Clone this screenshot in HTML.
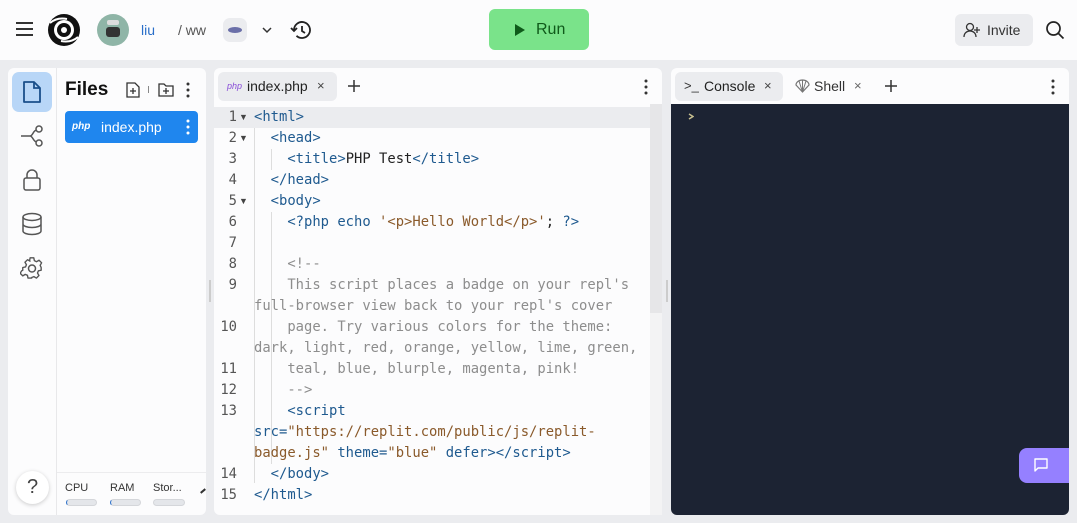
<!DOCTYPE html>
<html><head><meta charset="utf-8">
<style>
*{box-sizing:border-box;margin:0;padding:0}
body{width:1077px;height:523px;overflow:hidden;background:#ebecef;font-family:"Liberation Sans",sans-serif;position:relative;color:#222}
.abs{position:absolute}
#hdr{left:0;top:0;width:1077px;height:60px;background:#fcfcfd}
.panel{background:#fcfcfd;border-radius:6px}
.code{font-family:"DejaVu Sans Mono",monospace;font-size:13.85px;line-height:21px;white-space:pre;color:#1f5a8f}
.ln{position:absolute;left:212px;width:25px;text-align:right;font-family:"DejaVu Sans Mono",monospace;font-size:13.85px;line-height:21px;color:#555}
.fold{position:absolute;left:239px;font-size:9px;line-height:21px;color:#444}
.t{color:#1f5a8f}.p{color:#222}.s{color:#8a5a2b}.c{color:#8d8d8d}
</style></head><body>
<div id="hdr" class="abs"></div>
<svg class="abs" style="left:15px;top:21px" width="19" height="16"><path d="M1 2h17M1 8h17M1 14h17" stroke="#333" stroke-width="2"/></svg>
<svg class="abs" style="left:47px;top:13px" width="34" height="34" viewBox="0 0 34 34"><circle cx="17" cy="17" r="16" fill="#111"/><circle cx="17" cy="17" r="10" fill="#fff"/><circle cx="17" cy="17" r="7" fill="#111"/><circle cx="17" cy="17" r="3" fill="#fff"/><path d="M3 10 Q10 4 20 6" stroke="#fff" stroke-width="2" fill="none"/><path d="M31 24 Q24 30 14 28" stroke="#fff" stroke-width="2" fill="none"/></svg>
<div class="abs" style="left:97px;top:14px;width:32px;height:32px;border-radius:50%;background:#8fb5a7"></div>
<div class="abs" style="left:107px;top:20px;width:12px;height:5px;background:#ddd;border-radius:2px"></div>
<div class="abs" style="left:106px;top:27px;width:14px;height:10px;background:#333;border-radius:3px"></div>
<div class="abs" style="left:141px;top:22px;font-size:14px;color:#2a6fc9">liu</div>
<div class="abs" style="left:178px;top:22px;font-size:14px;color:#555">/ ww</div>
<div class="abs" style="left:223px;top:18px;width:24px;height:24px;border-radius:7px;background:#ebecef"></div>
<div class="abs" style="left:228px;top:27px;width:14px;height:6px;border-radius:50%;background:#6a6fa8"></div>
<svg class="abs" style="left:261px;top:26px" width="12" height="8"><path d="M2 2l4 4 4-4" stroke="#333" stroke-width="1.5" fill="none"/></svg>
<svg class="abs" style="left:290px;top:20px" width="22" height="20" viewBox="0 0 22 20"><path d="M4 10a8 8 0 1 1 2.5 5.8" stroke="#222" stroke-width="1.8" fill="none"/><path d="M1 8l3 3 3-3" stroke="#222" stroke-width="1.8" fill="none"/><path d="M12 6v5l3 2" stroke="#222" stroke-width="1.8" fill="none"/></svg>
<div class="abs" style="left:489px;top:9px;width:100px;height:41px;border-radius:6px;background:#7ae38a"></div>
<svg class="abs" style="left:514px;top:23px" width="12" height="14"><path d="M1 1l10 6-10 6z" fill="#0f5a1a"/></svg>
<div class="abs" style="left:536px;top:21px;font-size:16px;color:#0f5a1a">Run</div>
<div class="abs" style="left:955px;top:14px;width:78px;height:32px;border-radius:6px;background:#ebecef"></div>
<svg class="abs" style="left:963px;top:22px" width="18" height="16"><circle cx="7" cy="5" r="3.5" stroke="#333" stroke-width="1.3" fill="none"/><path d="M1 15c0-4 3-6 6-6s6 2 6 6M14 5v6M11 8h6" stroke="#333" stroke-width="1.3" fill="none"/></svg>
<div class="abs" style="left:987px;top:22px;font-size:14px;color:#333">Invite</div>
<svg class="abs" style="left:1045px;top:20px" width="20" height="20"><circle cx="8.5" cy="8.5" r="6.5" stroke="#222" stroke-width="1.7" fill="none"/><path d="M13.5 13.5l5 5" stroke="#222" stroke-width="1.7"/></svg>

<div class="abs panel" style="left:8px;top:68px;width:198px;height:447px"></div>
<div class="abs" style="left:56px;top:68px;width:1px;height:447px;background:#e8e8ea"></div>
<div class="abs" style="left:12px;top:72px;width:40px;height:40px;border-radius:7px;background:#b8d6f7"></div>
<svg class="abs" style="left:22px;top:80px" width="20" height="24"><path d="M2 2h10l6 6v14H2z" stroke="#1a4f8a" stroke-width="1.8" fill="none" stroke-linejoin="round"/><path d="M12 2v6h6" stroke="#1a4f8a" stroke-width="1.8" fill="none"/></svg>
<svg class="abs" style="left:20px;top:124px" width="24" height="24"><path d="M1 12h9M10 12c3 0 3-6 7-6M10 12c3 0 3 6 7 6" stroke="#555" stroke-width="1.5" fill="none"/><circle cx="19" cy="5" r="3" stroke="#555" stroke-width="1.5" fill="#fff"/><circle cx="19" cy="19" r="3" stroke="#555" stroke-width="1.5" fill="#fff"/></svg>
<svg class="abs" style="left:22px;top:168px" width="20" height="24"><rect x="2" y="10" width="16" height="12" rx="2" stroke="#555" stroke-width="1.5" fill="none"/><path d="M5 10V7a5 5 0 0 1 10 0v3" stroke="#555" stroke-width="1.5" fill="none"/></svg>
<svg class="abs" style="left:21px;top:212px" width="22" height="24"><ellipse cx="11" cy="5" rx="9" ry="3.5" stroke="#555" stroke-width="1.5" fill="none"/><path d="M2 5v14c0 2 4 3.5 9 3.5s9-1.5 9-3.5V5M2 12c0 2 4 3.5 9 3.5s9-1.5 9-3.5" stroke="#555" stroke-width="1.5" fill="none"/></svg>
<svg class="abs" style="left:20px;top:256px" width="24" height="24" viewBox="0 0 24 24"><path d="M10 2h4l.6 3 2.4 1.2 2.7-1.6 2.8 2.8-1.6 2.7L22 12.5v3l-3 .6-1 2.4 1.6 2.7-2.8 2.8-2.7-1.6-2.4 1V24h-4l-.6-3-2.4-1-2.7 1.6-2.8-2.8 1.6-2.7L2 15.5v-3l3-.6 1-2.4-1.6-2.7 2.8-2.8 2.7 1.6L9.4 5z" transform="scale(.92) translate(1,0)" stroke="#555" stroke-width="1.5" fill="none" stroke-linejoin="round"/><circle cx="12" cy="12.5" r="3.5" stroke="#555" stroke-width="1.5" fill="none"/></svg>
<div class="abs" style="left:16px;top:471px;width:33px;height:33px;border-radius:50%;background:#fff;box-shadow:0 1px 4px rgba(0,0,0,.2);text-align:center;font-size:20px;line-height:33px;color:#444">?</div>

<div class="abs" style="left:65px;top:79px;font-size:19px;font-weight:bold;color:#111">Files</div>
<svg class="abs" style="left:126px;top:82px" width="14" height="16"><path d="M1 1h8l4 4v10H1z" stroke="#333" stroke-width="1.3" fill="none"/><path d="M7 6v6M4 9h6" stroke="#333" stroke-width="1.3"/></svg>
<div class="abs" style="left:148px;top:86px;width:1px;height:7px;background:#888"></div>
<svg class="abs" style="left:158px;top:83px" width="16" height="14"><path d="M1 1h5l2 2h7v10H1z" stroke="#333" stroke-width="1.3" fill="none"/><path d="M8 5v6M5 8h6" stroke="#333" stroke-width="1.3"/></svg>
<svg class="abs" style="left:185px;top:82px" width="6" height="16"><circle cx="3" cy="2" r="1.5" fill="#333"/><circle cx="3" cy="8" r="1.5" fill="#333"/><circle cx="3" cy="14" r="1.5" fill="#333"/></svg>
<div class="abs" style="left:65px;top:111px;width:133px;height:32px;border-radius:4px;background:#1f86ee"></div>
<div class="abs" style="left:72px;top:121px;font-size:10px;font-style:italic;font-weight:bold;color:#fff">php</div>
<div class="abs" style="left:101px;top:119px;font-size:14px;color:#fff">index.php</div>
<svg class="abs" style="left:185px;top:119px" width="6" height="16"><circle cx="3" cy="2" r="1.5" fill="#fff"/><circle cx="3" cy="8" r="1.5" fill="#fff"/><circle cx="3" cy="14" r="1.5" fill="#fff"/></svg>
<div class="abs" style="left:57px;top:472px;width:149px;height:1px;background:#ececee"></div>
<div class="abs" style="left:65px;top:482px;font-size:11px;color:#333">CPU</div>
<div class="abs" style="left:110px;top:482px;font-size:11px;color:#333">RAM</div>
<div class="abs" style="left:153px;top:482px;font-size:11px;color:#333">Stor...</div>
<div class="abs" style="left:66px;top:499px;width:31px;height:7px;border-radius:4px;background:#e4e6ea;border:1px solid #d4d6da;border-left:1.5px solid #2a6fc9"></div>
<div class="abs" style="left:110px;top:499px;width:31px;height:7px;border-radius:4px;background:#e4e6ea;border:1px solid #d4d6da;border-left:1.5px solid #2a6fc9"></div>
<div class="abs" style="left:153px;top:499px;width:32px;height:7px;border-radius:4px;background:#e4e6ea;border:1px solid #d4d6da"></div>
<div class="abs" style="left:200px;top:490px;width:6px;height:2px;background:#333;transform:rotate(-40deg)"></div>

<div class="abs panel" style="left:214px;top:68px;width:448px;height:447px"></div>
<div class="abs" style="left:218px;top:72px;width:119px;height:29px;border-radius:6px;background:#ebecef"></div>
<div class="abs" style="left:227px;top:81px;font-size:9px;font-style:italic;color:#8a4fd8">php</div>
<div class="abs" style="left:247px;top:78px;font-size:14px;color:#222">index.php</div>
<div class="abs" style="left:317px;top:78px;font-size:13px;color:#444">×</div>
<svg class="abs" style="left:347px;top:79px" width="14" height="14"><path d="M7 1v12M1 7h12" stroke="#333" stroke-width="1.5"/></svg>
<svg class="abs" style="left:643px;top:79px" width="6" height="16"><circle cx="3" cy="2" r="1.5" fill="#333"/><circle cx="3" cy="8" r="1.5" fill="#333"/><circle cx="3" cy="14" r="1.5" fill="#333"/></svg>
<div class="abs" style="left:214px;top:107px;width:436px;height:21px;background:#ebecef"></div>
<div class="abs" style="left:650px;top:104px;width:12px;height:411px;background:#f3f3f4"></div>
<div class="abs" style="left:650px;top:104px;width:12px;height:209px;background:#e6e6e8"></div>
<div class="abs" style="left:254px;top:128px;width:1px;height:355px;background:#ddd"></div>
<div class="abs" style="left:271px;top:149px;width:1px;height:21px;background:#ddd"></div>
<div class="abs" style="left:271px;top:212px;width:1px;height:252px;background:#ddd"></div>

<div class="ln" style="top:107px">1</div><div class="fold" style="top:107px">▼</div>
<div class="ln" style="top:128px">2</div><div class="fold" style="top:128px">▼</div>
<div class="ln" style="top:149px">3</div>
<div class="ln" style="top:170px">4</div>
<div class="ln" style="top:191px">5</div><div class="fold" style="top:191px">▼</div>
<div class="ln" style="top:212px">6</div>
<div class="ln" style="top:233px">7</div>
<div class="ln" style="top:254px">8</div>
<div class="ln" style="top:275px">9</div>
<div class="ln" style="top:317px">10</div>
<div class="ln" style="top:359px">11</div>
<div class="ln" style="top:380px">12</div>
<div class="ln" style="top:401px">13</div>
<div class="ln" style="top:464px">14</div>
<div class="ln" style="top:485px">15</div>
<div class="abs code" style="left:254px;top:107px">&lt;html&gt;
  &lt;head&gt;
    &lt;title&gt;<span class="p">PHP Test</span>&lt;/title&gt;
  &lt;/head&gt;
  &lt;body&gt;
    &lt;?php echo <span class="s">'&lt;p&gt;Hello World&lt;/p&gt;'</span><span class="p">;</span> ?&gt;

<span class="c">    &lt;!--
    This script places a badge on your repl's
full-browser view back to your repl's cover
    page. Try various colors for the theme:
dark, light, red, orange, yellow, lime, green,
    teal, blue, blurple, magenta, pink!
    --&gt;</span>
    &lt;script
src=<span class="s">"https://replit.com/public/js/replit-
badge.js"</span> theme=<span class="s">"blue"</span> defer&gt;&lt;/script&gt;
  &lt;/body&gt;
&lt;/html&gt;</div>
<div class="abs" style="left:209px;top:280px;width:2px;height:22px;background:#ccc"></div>
<div class="abs" style="left:666px;top:280px;width:2px;height:22px;background:#ccc"></div>

<div class="abs panel" style="left:671px;top:68px;width:398px;height:447px"></div>
<div class="abs" style="left:675px;top:72px;width:108px;height:29px;border-radius:6px;background:#ebecef"></div>
<div class="abs" style="left:684px;top:78px;font-size:13px;color:#333">&gt;_</div>
<div class="abs" style="left:704px;top:78px;font-size:14px;color:#222">Console</div>
<div class="abs" style="left:764px;top:78px;font-size:13px;color:#444">×</div>
<svg class="abs" style="left:795px;top:79px" width="15" height="14"><path d="M7.5 13L1 6a6.5 5 0 0 1 13 0z" stroke="#777" stroke-width="1.2" fill="none"/><path d="M7.5 13L4 2M7.5 13L11 2M7.5 13V1" stroke="#777" stroke-width="1"/></svg>
<div class="abs" style="left:814px;top:78px;font-size:14px;color:#333">Shell</div>
<div class="abs" style="left:854px;top:78px;font-size:13px;color:#666">×</div>
<svg class="abs" style="left:884px;top:79px" width="14" height="14"><path d="M7 1v12M1 7h12" stroke="#333" stroke-width="1.5"/></svg>
<svg class="abs" style="left:1050px;top:79px" width="6" height="16"><circle cx="3" cy="2" r="1.5" fill="#333"/><circle cx="3" cy="8" r="1.5" fill="#333"/><circle cx="3" cy="14" r="1.5" fill="#333"/></svg>
<div class="abs" style="left:671px;top:104px;width:398px;height:411px;background:#1c2333;border-radius:0 0 6px 6px"></div>
<svg class="abs" style="left:688px;top:113px" width="6" height="7"><path d="M1 1l4 2.5L1 6" stroke="#c8c090" stroke-width="1.5" fill="none"/></svg>
<div class="abs" style="left:1019px;top:448px;width:50px;height:35px;border-radius:8px 0 0 8px;background:#9580ff"></div>
<svg class="abs" style="left:1033px;top:457px" width="16" height="15"><path d="M2 2h12v9H5l-3 3z" stroke="#fff" stroke-width="1.4" fill="none" stroke-linejoin="round"/></svg>
</body></html>
